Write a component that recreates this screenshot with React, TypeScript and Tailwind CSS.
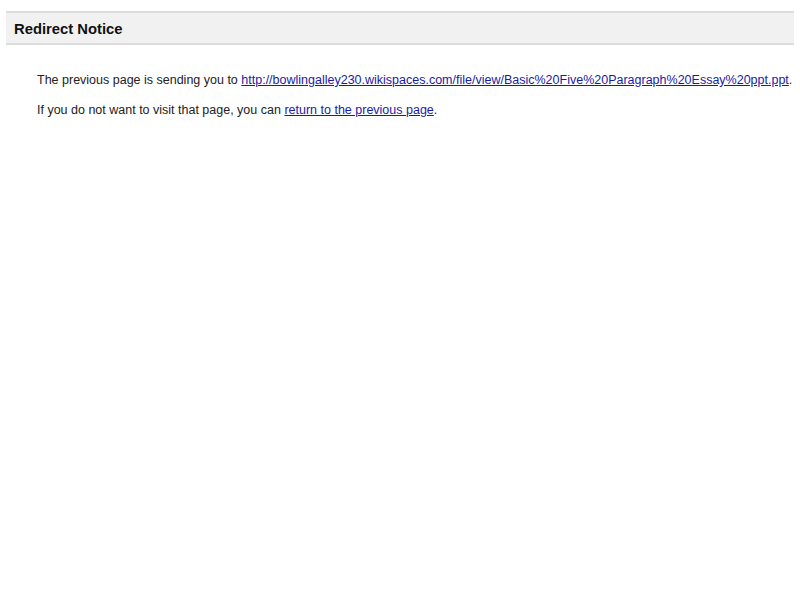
export default function App() {
  return (
    <div className="min-h-[600px] bg-white font-['Liberation_Sans',Arial,sans-serif] text-[#222]">
      <div className="pt-[11px] px-[6px]">
        <div className="h-[34px] flex items-center px-2 pt-[3px] bg-[#f1f1f1] border-t-2 border-b-2 border-[#dcdcdc]">
          <h1 className="text-[14.8px] font-bold text-[#111]">Redirect Notice</h1>
        </div>
      </div>
      <div className="pl-[37px] pt-[28px] text-[12.5px] leading-[15px]">
        <p>
          The previous page is sending you to{" "}
          <a href="#" className="text-[#1a1aa6] underline">
            http://bowlingalley230.wikispaces.com/file/view/Basic%20Five%20Paragraph%20Essay%20ppt.ppt
          </a>
          .
        </p>
        <p className="mt-[15px]">
          If you do not want to visit that page, you can{" "}
          <a href="#" className="text-[#1a1aa6] underline">
            return to the previous page
          </a>
          .
        </p>
      </div>
    </div>
  );
}
